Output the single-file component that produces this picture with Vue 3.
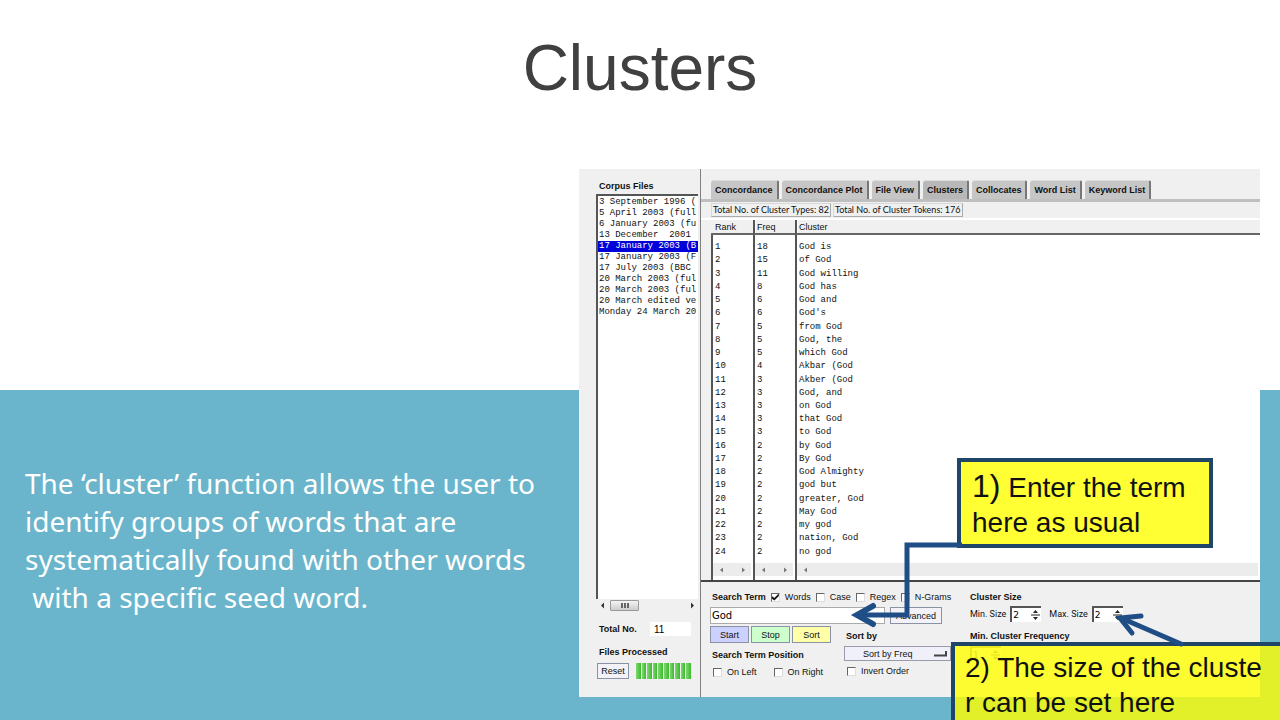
<script setup>
import { ref } from 'vue'

const files = [
  '3 September 1996 (',
  '5 April 2003 (full',
  '6 January 2003 (fu',
  '13 December  2001',
  '17 January 2003 (B',
  '17 January 2003 (F',
  '17 July 2003 (BBC',
  '20 March 2003 (ful',
  '20 March 2003 (ful',
  '20 March edited ve',
  'Monday 24 March 20',
]
const selectedFile = 4

const tabs = ['Concordance', 'Concordance Plot', 'File View', 'Clusters', 'Collocates', 'Word List', 'Keyword List']
const activeTab = ref('Clusters')

const clusters = [
  [18, 'God is'], [15, 'of God'], [11, 'God willing'], [8, 'God has'], [6, 'God and'], [6, "God's"],
  [5, 'from God'], [5, 'God, the'], [5, 'which God'], [4, 'Akbar (God'], [3, 'Akber (God'], [3, 'God, and'],
  [3, 'on God'], [3, 'that God'], [3, 'to God'], [2, 'by God'], [2, 'By God'], [2, 'God Almighty'],
  [2, 'god but'], [2, 'greater, God'], [2, 'May God'], [2, 'my god'], [2, 'nation, God'], [2, 'no god'],
]

const term = ref('God')
const words = ref(true)
const minSize = ref('2')
const maxSize = ref('2')
const minFreq = ref('1')
</script>

<template>
  <main class="slide">
    <h1 class="title">Clusters</h1>

    <section class="band">
      <p class="note">The ‘cluster’ function allows the user to<br>identify groups of words that are<br>systematically found with other words<br>&nbsp;with a specific seed word.</p>
    </section>

    <section class="window">
      <aside class="corpus">
        <h2 class="label">Corpus Files</h2>
        <ul class="files">
          <li v-for="(f, i) in files" :key="i" :class="{ selected: i === selectedFile }">{{ f }}</li>
        </ul>
        <div class="hscroll">
          <svg width="5" height="7" viewBox="0 0 5 7"><path d="M4 0.5L1 3.5L4 6.5Z" fill="#333" /></svg>
          <span class="thumb"><i></i><i></i><i></i></span>
          <svg width="5" height="7" viewBox="0 0 5 7"><path d="M1 0.5L4 3.5L1 6.5Z" fill="#333" /></svg>
        </div>
        <div class="total">
          <label class="label" for="total">Total No.</label>
          <input id="total" class="count" value="11" readonly>
        </div>
        <h2 class="label processed">Files Processed</h2>
        <div class="progress-row">
          <button class="btn reset" type="button">Reset</button>
          <div class="progress"><i v-for="n in 10" :key="n"></i></div>
        </div>
      </aside>

      <div class="tool">
        <nav class="tabs">
          <button v-for="t in tabs" :key="t" type="button" class="tab" :class="{ active: t === activeTab }" @click="activeTab = t">{{ t }}</button>
        </nav>
        <div class="totals">
          <span>Total No. of Cluster Types: 82</span>
          <span>Total No. of Cluster Tokens: 176</span>
        </div>

        <table class="results">
          <colgroup><col class="c-num"><col class="c-num"><col></colgroup>
          <thead>
            <tr><th>Rank</th><th>Freq</th><th>Cluster</th></tr>
          </thead>
          <tbody>
            <tr v-for="(c, i) in clusters" :key="i"><td>{{ i + 1 }}</td><td>{{ c[0] }}</td><td>{{ c[1] }}</td></tr>
          </tbody>
          <tfoot>
            <tr>
              <td v-for="n in 3" :key="n">
                <div class="track">
                  <svg width="5" height="6" viewBox="0 0 5 6"><path d="M4 0.5L1 3L4 5.5Z" fill="#777" /></svg>
                  <svg v-if="n < 3" width="5" height="6" viewBox="0 0 5 6"><path d="M1 0.5L4 3L1 5.5Z" fill="#777" /></svg>
                </div>
              </td>
            </tr>
          </tfoot>
        </table>

        <form class="controls" @submit.prevent>
          <div class="search">
            <div class="options">
              <label class="label" for="term">Search Term</label>
              <label class="check"><input v-model="words" type="checkbox"><span>Words</span></label>
              <label class="check"><input type="checkbox"><span>Case</span></label>
              <label class="check"><input type="checkbox"><span>Regex</span></label>
              <label class="check"><input type="checkbox"><span>N-Grams</span></label>
            </div>
            <div class="entry">
              <input id="term" v-model="term" type="text" class="term">
              <button class="btn advanced" type="button">Advanced</button>
            </div>
            <div class="lower">
              <div class="actions">
                <div class="buttons">
                  <button class="btn start" type="button">Start</button>
                  <button class="btn stop" type="button">Stop</button>
                  <button class="btn sort" type="button">Sort</button>
                </div>
                <h3 class="label">Search Term Position</h3>
                <div class="position">
                  <label class="check"><input type="checkbox"><span>On Left</span></label>
                  <label class="check"><input type="checkbox"><span>On Right</span></label>
                </div>
              </div>
              <div class="sorting">
                <label class="label" for="sortby">Sort by</label>
                <div class="picker">
                  <select id="sortby"><option>Sort by Freq</option></select>
                  <svg width="13" height="6" viewBox="0 0 13 6"><path d="M0 4.5H12V0" fill="none" stroke="#444" stroke-width="2" /></svg>
                </div>
                <label class="check"><input type="checkbox"><span>Invert Order</span></label>
              </div>
            </div>
          </div>

          <div class="sizes">
            <h3 class="label">Cluster Size</h3>
            <div class="spinners">
              <label for="min">Min. Size</label>
              <div class="spin">
                <input id="min" v-model="minSize" type="text">
                <svg width="9" height="14" viewBox="0 0 9 14"><path d="M2 5L4.5 2L7 5ZM2 9L4.5 12L7 9ZM0 6.5H9V7.5H0Z" fill="#222" /></svg>
              </div>
              <label for="max" class="max">Max. Size</label>
              <div class="spin">
                <input id="max" v-model="maxSize" type="text">
                <svg width="9" height="14" viewBox="0 0 9 14"><path d="M2 5L4.5 2L7 5ZM2 9L4.5 12L7 9ZM0 6.5H9V7.5H0Z" fill="#222" /></svg>
              </div>
            </div>
            <label class="label" for="freq">Min. Cluster Frequency</label>
            <div class="spin faint">
              <input id="freq" v-model="minFreq" type="text">
              <svg width="9" height="14" viewBox="0 0 9 14"><path d="M2 5L4.5 2L7 5ZM2 9L4.5 12L7 9ZM0 6.5H9V7.5H0Z" fill="#222" /></svg>
            </div>
          </div>
        </form>
      </div>

      <p class="callout first"><span class="big">1)</span> Enter the term<br>here as usual</p>
      <p class="callout second">2) The size of the cluste<br>r can be set here</p>
      <svg class="arrows" width="681" height="528" viewBox="0 0 681 528" fill="none" stroke="#1f4e86">
        <path d="M383 376H328V446H279" stroke-width="5" />
        <path d="M294 437L278 446L294 455" stroke-width="6" stroke-linecap="round" />
        <path d="M602 475L542 449" stroke-width="5" stroke-linecap="round" />
        <path d="M562 447L541 449L553 464" stroke-width="5" stroke-linecap="round" />
      </svg>
    </section>
  </main>
</template>

<style>
body {
  margin: 0;
}
</style>

<style scoped>
.slide {
  display: grid;
  grid-template-columns: 579fr 681fr 20px;
  grid-template-rows: 169px 221px 1fr;
  min-height: 100vh;
  overflow: hidden;
  background: #fff;
  font-family: "Liberation Sans", Arial, sans-serif;
  color: #111;
}
.title {
  grid-area: 1 / 1 / 2 / 4;
  margin: 30px 0 0;
  text-align: center;
  font-size: 64px;
  font-weight: 400;
  line-height: 76px;
  color: #404040;
}
.band {
  grid-area: 3 / 1 / 4 / 4;
  padding: 74px 0 0 25px;
  background: #6ab5cb;
}
.note {
  margin: 0;
  font-family: "Noto Sans", sans-serif;
  font-size: 28px;
  line-height: 38px;
  color: #fff;
}
.window {
  grid-area: 2 / 2 / 4 / 3;
  position: relative;
  display: flex;
  align-self: start;
  height: 528px;
  background: #f0f0f0;
  font-size: 9px;
  line-height: 12px;
}
.label {
  margin: 0;
  font-size: 9px;
  font-weight: 700;
  line-height: 12px;
  white-space: nowrap;
}
.corpus {
  box-sizing: border-box;
  flex: none;
  width: 122px;
  padding: 11px 2px 0 17px;
  border-right: 1px solid #808080;
}
.corpus .label {
  margin-left: 3px;
}
.files {
  box-sizing: border-box;
  height: 405px;
  margin: 2px 0 0;
  padding: 1px 0;
  list-style: none;
  background: #fff;
  border-top: 2px solid #555;
  border-left: 2px solid #555;
  font-family: "Liberation Mono", monospace;
  font-size: 9px;
  line-height: 11px;
  white-space: pre;
}
.files li {
  padding-left: 1px;
}
.files .selected {
  background: #0000d8;
  color: #fff;
}
.hscroll {
  display: flex;
  align-items: center;
  height: 13px;
  padding: 0 3px 0 4px;
}
.hscroll svg:last-child {
  margin-left: auto;
}
.thumb {
  display: flex;
  box-sizing: border-box;
  justify-content: center;
  align-items: center;
  gap: 1px;
  width: 29px;
  height: 11px;
  margin-left: 5px;
  border: 1px solid #999;
  border-radius: 1px;
  background: linear-gradient(#f4f4f4, #ccc);
}
.thumb i {
  width: 2px;
  height: 5px;
  background: #666;
}
.total {
  display: flex;
  align-items: center;
  margin-top: 10px;
}
.count {
  box-sizing: border-box;
  width: 41px;
  height: 14px;
  margin-left: auto;
  margin-right: 7px;
  padding: 0 4px;
  border: 0;
  background: #fff;
  font: 10px/12px "Liberation Sans", sans-serif;
}
.corpus .processed {
  margin-top: 10px;
}
.progress-row {
  display: flex;
  align-items: center;
  margin-top: 5px;
  padding-left: 1px;
}
.btn {
  box-sizing: border-box;
  height: 17px;
  padding: 0;
  border: 1px solid #8a93a5;
  border-radius: 0;
  background: #f2f2f8;
  font: 9px/12px "Liberation Sans", sans-serif;
  color: #111;
}
.reset {
  width: 32px;
  height: 16px;
}
.progress {
  display: flex;
  gap: 1px;
  width: 55px;
  margin-left: 7px;
}
.progress i {
  flex: 1;
  height: 16px;
  background: linear-gradient(90deg, #7fd872, #3cb92c);
}
.tool {
  flex: 1;
  min-width: 0;
  display: flex;
  flex-direction: column;
  padding-top: 10px;
}
.tabs {
  display: flex;
  align-items: flex-end;
  gap: 3px;
  height: 20px;
  padding-left: 10px;
  border-bottom: 3px solid #bfbfbf;
}
.tab {
  height: 19px;
  padding: 0 4px;
  border: 0;
  border-top: 1px solid #ddd;
  border-right: 2px solid #777;
  border-radius: 3px 2px 0 0;
  background: #c6c6c6;
  font: 700 9px/12px "Liberation Sans", sans-serif;
  color: #111;
}
.tab.active {
  background: #b8b8b8;
}
.totals {
  display: flex;
  gap: 2px;
  padding: 1px 0 1px 10px;
  border-bottom: 2px solid #fff;
}
.totals span {
  padding: 0 1px;
  border: 1px solid;
  border-color: #d8d8d8 #aaa #aaa #d8d8d8;
  font-family: Lato, sans-serif;
  font-size: 9px;
  line-height: 12px;
}
.results {
  width: calc(100% - 10px);
  height: 360px;
  margin-left: 10px;
  table-layout: fixed;
  border-collapse: separate;
  border-spacing: 0;
}
.c-num {
  width: 42px;
}
.results th {
  height: 13px;
  padding: 0 2px;
  border-bottom: 2px solid #666;
  text-align: left;
  font-weight: 400;
  line-height: 12px;
}
.results th:first-child {
  padding-left: 4px;
}
.results th + th,
.results td {
  border-left: 2px solid #555;
}
.results th + th,
.results td + td {
  box-shadow: inset 1px 0 0 #fff;
}
.results td {
  padding: 4px 1px 0 2px;
  background: #fff;
  font-family: "Liberation Mono", monospace;
  line-height: 9px;
}
.results tbody tr:first-child td {
  padding-top: 8px;
}
.results tfoot td {
  padding: 6px 2px 4px 0;
}
.track {
  display: flex;
  align-items: center;
  justify-content: space-between;
  height: 13px;
  padding: 0 5px 0 6px;
  background: #ececec;
}
.controls {
  display: flex;
  flex: 1;
  gap: 19px;
  padding: 9px 0 0 9px;
  border-top: 2px solid #444;
}
.search {
  flex: none;
  width: 241px;
}
.options,
.position,
.spinners {
  display: flex;
  align-items: center;
}
.options {
  gap: 5px;
  padding-left: 2px;
  height: 12px;
}
.check {
  display: flex;
  align-items: center;
  gap: 5px;
  white-space: nowrap;
}
.check input {
  appearance: none;
  box-sizing: border-box;
  flex: none;
  width: 9px;
  height: 9px;
  margin: 0;
  border: 1px solid;
  border-color: #666 #ddd #ddd #666;
  background: #fff;
}
.check input:checked::before {
  content: "";
  display: block;
  width: 7px;
  height: 7px;
  background: #111;
  clip-path: polygon(0 35%, 35% 65%, 100% 0, 100% 35%, 35% 100%, 0 70%);
}
.entry {
  display: flex;
  gap: 5px;
  margin-top: 4px;
}
.term {
  box-sizing: border-box;
  width: 175px;
  height: 17px;
  padding: 0 1px;
  border: 1px solid #aaa;
  border-radius: 0;
  background: #fff;
  font: 10px/12px "DejaVu Sans", sans-serif;
}
.advanced {
  width: 52px;
}
.lower {
  display: flex;
  gap: 13px;
  margin-top: 2px;
}
.actions {
  flex: none;
  width: 121px;
}
.actions .label {
  margin: 6px 0 5px 2px;
}
.buttons {
  display: flex;
  gap: 2px;
}
.buttons .btn {
  width: 39px;
}
.start {
  background: #ccd0ff;
}
.stop {
  background: #ccffcc;
}
.sort {
  background: #ffffa8;
}
.position {
  gap: 17px;
  padding-left: 3px;
}
.sorting {
  flex: 1;
  padding-top: 4px;
}
.sorting .label {
  display: block;
  margin-left: 2px;
}
.sorting .check {
  margin: 4px 0 0 3px;
}
.picker {
  position: relative;
  margin-top: 4px;
}
.picker select {
  appearance: none;
  box-sizing: border-box;
  display: block;
  width: 100%;
  height: 15px;
  padding: 0 18px;
  border: 1px solid #9a9aa8;
  border-radius: 0;
  background: #f0f0fa;
  font: 9px/12px "Liberation Sans", sans-serif;
  color: #111;
}
.picker svg {
  position: absolute;
  right: 4px;
  top: 5px;
}
.sizes {
  flex: 1;
}
.spinners {
  gap: 4px;
  margin: 3px 0 8px;
  font-family: Roboto, sans-serif;
}
.max {
  margin-left: 4px;
}
.sizes > .label {
  display: block;
}
.spin {
  display: flex;
  align-items: center;
  box-sizing: border-box;
  width: 31px;
  height: 16px;
  border-top: 2px solid #555;
  border-left: 2px solid #555;
  background: #fff;
}
.spin input {
  box-sizing: border-box;
  width: 19px;
  height: 13px;
  padding: 0 1px;
  border: 0;
  background: none;
  font: 9px/12px "DejaVu Sans", sans-serif;
}
.spin.faint {
  margin-top: 4px;
  opacity: 0.6;
}
.callout {
  position: absolute;
  box-sizing: border-box;
  margin: 0;
  border: 4px solid #1f4668;
  background: rgba(255, 255, 0, 0.8);
  font-size: 28px;
  line-height: 35px;
  color: #111;
  white-space: nowrap;
}
.first {
  left: 378px;
  top: 289px;
  width: 256px;
  height: 90px;
  padding: 7px 11px;
}
.big {
  font-size: 32px;
}
.second {
  left: 372px;
  top: 473px;
  width: 340px;
  height: 92px;
  padding: 4px 10px;
}
.arrows {
  position: absolute;
  left: 0;
  top: 0;
  pointer-events: none;
}
</style>
